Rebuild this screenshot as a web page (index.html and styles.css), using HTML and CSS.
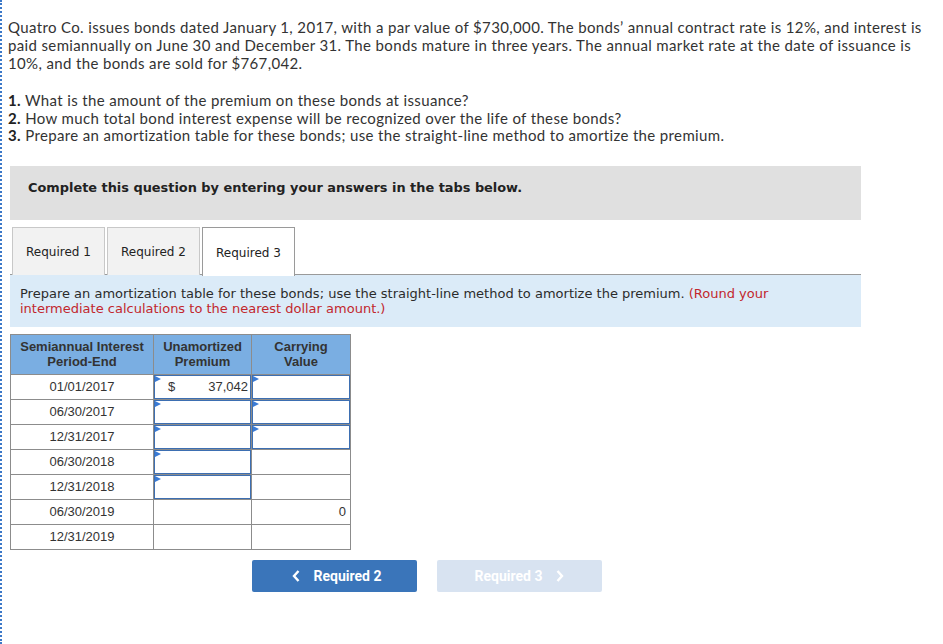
FILE: index.html
```html
<!DOCTYPE html>
<html>
<head>
<meta charset="utf-8">
<link rel="stylesheet" href="styles.css">
</head>
<body>
<div class="page">
  <p class="intro">Quatro Co. issues bonds dated January 1, 2017, with a par value of $730,000. The bonds’ annual contract rate is 12%, and interest is<br>paid semiannually on June 30 and December 31. The bonds mature in three years. The annual market rate at the date of issuance is<br>10%, and the bonds are sold for $767,042.</p>
  <ol class="questions">
    <li><b>1.</b> What is the amount of the premium on these bonds at issuance?</li>
    <li><b>2.</b> How much total bond interest expense will be recognized over the life of these bonds?</li>
    <li><b>3.</b> Prepare an amortization table for these bonds; use the straight-line method to amortize the premium.</li>
  </ol>
  <div class="notice">Complete this question by entering your answers in the tabs below.</div>
  <div class="tabs">
    <div class="tab">Required 1</div>
    <div class="tab">Required 2</div>
    <div class="tab active">Required 3</div>
  </div>
  <div class="instructions">Prepare an amortization table for these bonds; use the straight-line method to amortize the premium. <span class="red">(Round your<br>intermediate calculations to the nearest dollar amount.)</span></div>
  <table class="amort">
    <thead>
      <tr><th>Semiannual Interest<br>Period-End</th><th>Unamortized<br>Premium</th><th>Carrying<br>Value</th></tr>
    </thead>
    <tbody>
      <tr><td class="date">01/01/2017</td><td class="inp"><div class="box"><span class="flag"></span><span class="cur">$</span><span class="val">37,042</span></div></td><td class="inp"><div class="box"><span class="flag"></span></div></td></tr>
      <tr><td class="date">06/30/2017</td><td class="inp"><div class="box"><span class="flag"></span></div></td><td class="inp"><div class="box"><span class="flag"></span></div></td></tr>
      <tr><td class="date">12/31/2017</td><td class="inp"><div class="box"><span class="flag"></span></div></td><td class="inp"><div class="box"><span class="flag"></span></div></td></tr>
      <tr><td class="date">06/30/2018</td><td class="inp"><div class="box"><span class="flag"></span></div></td><td></td></tr>
      <tr><td class="date">12/31/2018</td><td class="inp"><div class="box"><span class="flag"></span></div></td><td></td></tr>
      <tr><td class="date">06/30/2019</td><td></td><td class="num">0</td></tr>
      <tr><td class="date">12/31/2019</td><td></td><td></td></tr>
    </tbody>
  </table>
  <div class="nav">
    <button class="btn prev"><svg width="8" height="12" viewBox="0 0 8 12"><path d="M6.5 1 L2 6 L6.5 11" fill="none" stroke="#fff" stroke-width="2.4"/></svg><span>Required 2</span></button>
    <button class="btn next"><span>Required 3</span><svg width="8" height="12" viewBox="0 0 8 12"><path d="M1.5 1 L6 6 L1.5 11" fill="none" stroke="#fff" stroke-width="2.4"/></svg></button>
  </div>
</div>
</body>
</html>
```
FILE: styles.css
```css
html, body { margin: 0; padding: 0; background: #fff; }
.page {
  border-left: 2px dotted #3b78c8;
  min-height: 644px;
  box-sizing: border-box;
  padding: 18px 0 0 6px;
}
.intro {
  margin: 0;
  font-family: Lato, "Liberation Sans", sans-serif;
  font-size: 15px;
  letter-spacing: 0.36px;
  line-height: 18px;
  color: #333;
  white-space: nowrap;
}
.questions {
  list-style: none;
  margin: 20px 0 0 0;
  padding: 0;
  font-family: Lato, "Liberation Sans", sans-serif;
  font-size: 15px;
  letter-spacing: 0.36px;
  line-height: 17.5px;
  color: #333;
}
.questions b { font-weight: 700; color: #222; }
.notice {
  margin: 21px 0 0 2px;
  width: 851px;
  height: 54px;
  box-sizing: border-box;
  background: #e0e0e0;
  padding: 14px 0 0 18px;
  font-family: "DejaVu Sans", Verdana, sans-serif;
  font-weight: bold;
  font-size: 12.9px;
  line-height: 16px;
  color: #222;
}
.tabs {
  display: flex;
  gap: 2px;
  margin: 7px 0 0 4px;
  height: 48px;
}
.tab {
  width: 93px;
  box-sizing: border-box;
  background: #f2f2f2;
  border: 1px solid #c8c8c8;
  border-bottom: none;
  font-family: "DejaVu Sans", Verdana, sans-serif;
  font-size: 12px;
  color: #222;
  display: flex;
  align-items: center;
  justify-content: center;
  padding-top: 2px;
}
.tab.active {
  background: #fff;
  border-color: #9a9a9a;
  position: relative;
  z-index: 1;
  height: 49px;
}
.instructions {
  margin: -1px 0 0 2px;
  width: 851px;
  box-sizing: border-box;
  border-top: 1px solid #9a9a9a;
  background: #dbebf8;
  height: 53px;
  padding: 11px 0 0 10px;
  font-family: "DejaVu Sans", Verdana, sans-serif;
  font-size: 13px;
  line-height: 15px;
  color: #2b2b2b;
}
.red { color: #c2272d; }
.amort {
  margin: 7px 0 0 2px;
  border-collapse: collapse;
  font-family: "Liberation Sans", Arial, sans-serif;
  font-size: 13px;
  color: #333;
}
.amort th, .amort td {
  border: 1px solid #8c8c8c;
  padding: 0;
}
.amort th {
  background: #7aaee2;
  height: 38px;
  font-weight: bold;
  line-height: 15px;
  vertical-align: middle;
  padding-bottom: 1px;
}
.amort th:nth-child(1) { width: 142px; }
.amort th:nth-child(2) { width: 97px; }
.amort th:nth-child(3) { width: 98px; }
.amort td { height: 24px; }
.amort td.date { text-align: center; }
.amort td.num { text-align: right; padding-right: 4px; }
.amort td.inp { position: relative; }
.box {
  position: absolute;
  inset: 0;
  border: 1.5px solid #3d6fb2;
  display: flex;
  align-items: center;
  padding: 0 2px 0 13px;
}
.flag {
  position: absolute;
  left: 0;
  top: 0;
  width: 0;
  height: 0;
  border-top: 3px solid transparent;
  border-bottom: 3px solid transparent;
  border-left: 6px solid #3a7bd5;
}
.cur { flex: 0 0 auto; }
.val { flex: 1; text-align: right; }
.nav {
  display: flex;
  gap: 20px;
  margin: 10px 0 0 244px;
}
.btn {
  width: 165px;
  height: 32px;
  border: none;
  border-radius: 2px;
  display: flex;
  align-items: center;
  justify-content: center;
  gap: 14px;
  font-family: Roboto, "Liberation Sans", sans-serif;
  font-weight: bold;
  font-size: 14px;
  color: #fff;
  padding: 0;
}
.btn.prev { background: #3a75ba; padding-left: 4px; }
.btn.next { background: #d8e3f1; }
```
